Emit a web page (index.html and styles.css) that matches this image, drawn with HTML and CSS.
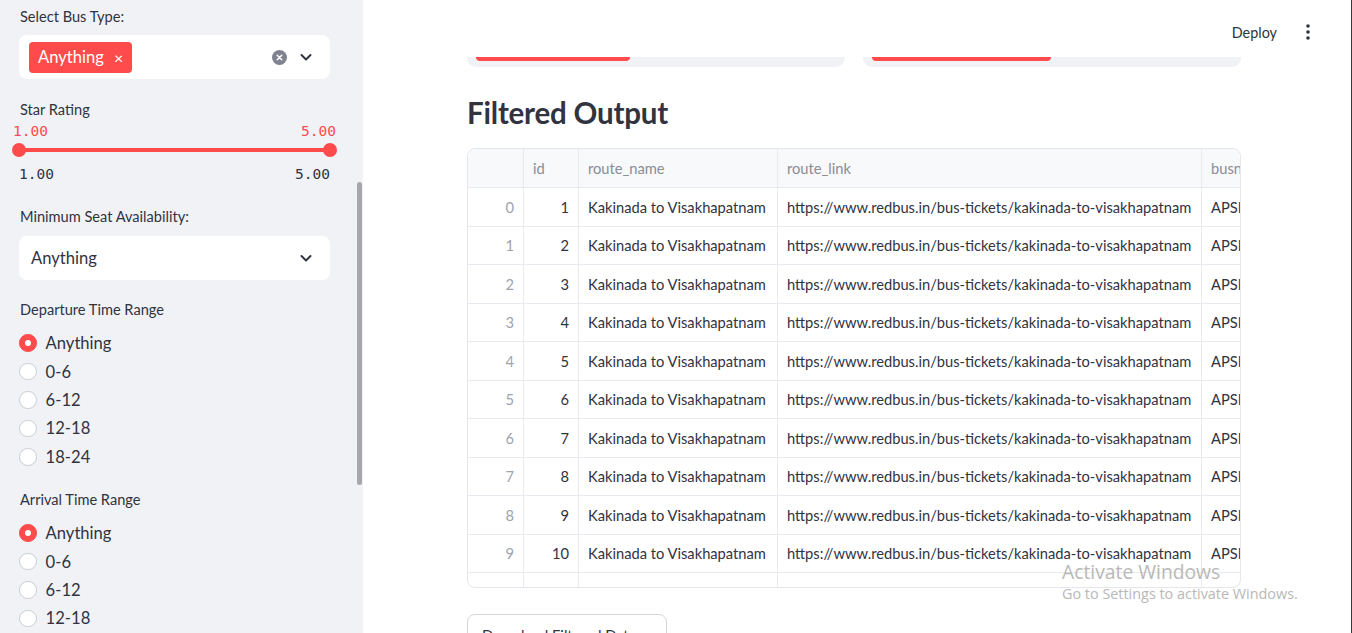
FILE: index.html
```html
<!DOCTYPE html>
<html lang="en">
<head>
<meta charset="utf-8">
<title>Bus Filter</title>
<link rel="stylesheet" href="styles.css">
</head>
<body>
<div class="app">
  <aside class="sidebar">
    <div class="sb-inner">
      <div class="label">Select Bus Type:</div>
      <div class="box multi">
        <span class="tag">Anything<span class="tag-x">×</span></span>
        <span class="spacer"></span>
        <svg class="clear" width="15" height="15" viewBox="0 0 16 16"><circle cx="8" cy="8" r="8" fill="#80838f"/><path d="M5.6 5.6l4.8 4.8M10.4 5.6l-4.8 4.8" stroke="#fff" stroke-width="1.6" stroke-linecap="round"/></svg>
        <svg class="chev" width="14" height="14" viewBox="0 0 14 14"><path d="M2.5 5l4.5 4.5L11.5 5" fill="none" stroke="#31333f" stroke-width="2" stroke-linecap="round" stroke-linejoin="round"/></svg>
      </div>

      <div class="label gap-slider">Star Rating</div>
      <div class="slider">
        <div class="thumb-vals"><span>1.00</span><span>5.00</span></div>
        <div class="track">
          <span class="thumb"></span>
          <span class="rail"></span>
          <span class="thumb"></span>
        </div>
        <div class="ticks"><span>1.00</span><span>5.00</span></div>
      </div>

      <div class="label gap-seat">Minimum Seat Availability:</div>
      <div class="box select">
        <span class="select-val">Anything</span>
        <span class="spacer"></span>
        <svg class="chev" width="14" height="14" viewBox="0 0 14 14"><path d="M2.5 5l4.5 4.5L11.5 5" fill="none" stroke="#31333f" stroke-width="2" stroke-linecap="round" stroke-linejoin="round"/></svg>
      </div>

      <div class="label gap-dep">Departure Time Range</div>
      <div class="radios">
        <div class="radio on"><span class="dot"></span><span>Anything</span></div>
        <div class="radio"><span class="dot"></span><span>0-6</span></div>
        <div class="radio"><span class="dot"></span><span>6-12</span></div>
        <div class="radio"><span class="dot"></span><span>12-18</span></div>
        <div class="radio"><span class="dot"></span><span>18-24</span></div>
      </div>

      <div class="label gap-arr">Arrival Time Range</div>
      <div class="radios">
        <div class="radio on"><span class="dot"></span><span>Anything</span></div>
        <div class="radio"><span class="dot"></span><span>0-6</span></div>
        <div class="radio"><span class="dot"></span><span>6-12</span></div>
        <div class="radio"><span class="dot"></span><span>12-18</span></div>
        <div class="radio"><span class="dot"></span><span>18-24</span></div>
      </div>
    </div>
    <div class="sb-scroll"></div>
  </aside>

  <main class="main">
    <header class="topbar">
      <span class="deploy">Deploy</span>
      <svg class="menu" width="4" height="16" viewBox="0 0 4 16"><circle cx="2" cy="2" r="1.8" fill="#31333f"/><circle cx="2" cy="8" r="1.8" fill="#31333f"/><circle cx="2" cy="14" r="1.8" fill="#31333f"/></svg>
    </header>

    <div class="content">
      <div class="cards">
        <div class="card"><div class="pbar pbar-a"></div></div>
        <div class="card"><div class="pbar pbar-b"></div></div>
      </div>

      <h3 class="title">Filtered Output</h3>

      <div class="dg">
        <div class="dg-grid">
          <div class="c h"></div><div class="c h">id</div><div class="c h">route_name</div><div class="c h">route_link</div><div class="c h">busname</div>

          <div class="c idx">0</div><div class="c num">1</div><div class="c">Kakinada to Visakhapatnam</div><div class="c">https://www.redbus.in/bus-tickets/kakinada-to-visakhapatnam</div><div class="c">APSRTC - 1245</div>
          <div class="c idx">1</div><div class="c num">2</div><div class="c">Kakinada to Visakhapatnam</div><div class="c">https://www.redbus.in/bus-tickets/kakinada-to-visakhapatnam</div><div class="c">APSRTC - 1246</div>
          <div class="c idx">2</div><div class="c num">3</div><div class="c">Kakinada to Visakhapatnam</div><div class="c">https://www.redbus.in/bus-tickets/kakinada-to-visakhapatnam</div><div class="c">APSRTC - 1247</div>
          <div class="c idx">3</div><div class="c num">4</div><div class="c">Kakinada to Visakhapatnam</div><div class="c">https://www.redbus.in/bus-tickets/kakinada-to-visakhapatnam</div><div class="c">APSRTC - 1248</div>
          <div class="c idx">4</div><div class="c num">5</div><div class="c">Kakinada to Visakhapatnam</div><div class="c">https://www.redbus.in/bus-tickets/kakinada-to-visakhapatnam</div><div class="c">APSRTC - 1249</div>
          <div class="c idx">5</div><div class="c num">6</div><div class="c">Kakinada to Visakhapatnam</div><div class="c">https://www.redbus.in/bus-tickets/kakinada-to-visakhapatnam</div><div class="c">APSRTC - 1250</div>
          <div class="c idx">6</div><div class="c num">7</div><div class="c">Kakinada to Visakhapatnam</div><div class="c">https://www.redbus.in/bus-tickets/kakinada-to-visakhapatnam</div><div class="c">APSRTC - 1251</div>
          <div class="c idx">7</div><div class="c num">8</div><div class="c">Kakinada to Visakhapatnam</div><div class="c">https://www.redbus.in/bus-tickets/kakinada-to-visakhapatnam</div><div class="c">APSRTC - 1252</div>
          <div class="c idx">8</div><div class="c num">9</div><div class="c">Kakinada to Visakhapatnam</div><div class="c">https://www.redbus.in/bus-tickets/kakinada-to-visakhapatnam</div><div class="c">APSRTC - 1253</div>
          <div class="c idx">9</div><div class="c num">10</div><div class="c">Kakinada to Visakhapatnam</div><div class="c">https://www.redbus.in/bus-tickets/kakinada-to-visakhapatnam</div><div class="c">APSRTC - 1254</div>
          <div class="c idx">10</div><div class="c num">11</div><div class="c">Kakinada to Visakhapatnam</div><div class="c">https://www.redbus.in/bus-tickets/kakinada-to-visakhapatnam</div><div class="c">APSRTC - 1255</div>
        </div>
      </div>

      <button class="dl">Download Filtered Data</button>
    </div>

    <div class="watermark">
      <div class="wm-1">Activate Windows</div>
      <div class="wm-2">Go to Settings to activate Windows.</div>
    </div>
  </main>
  <div class="edge"></div>
</div>
</body>
</html>
```

FILE: styles.css
```css
* { box-sizing: border-box; }
html, body { margin: 0; padding: 0; }
body {
  width: 1352px;
  height: 633px;
  overflow: hidden;
  font-family: Lato, "Noto Sans", sans-serif;
  color: #31333f;
  background: #fff;
}
.app { display: flex; height: 633px; }

/* ---------- sidebar ---------- */
.sidebar {
  width: 363px;
  flex: none;
  background: #f0f2f6;
  position: relative;
  overflow: hidden;
}
.sb-inner { padding: 7px 33px 0 19px; }
.label {
  font-size: 14.6px;
  line-height: 20px;
  height: 20px;
  white-space: nowrap;
  padding-left: 1px;
}
.box {
  margin-top: 8px;
  height: 44px;
  background: #fff;
  border-radius: 8px;
  display: flex;
  align-items: center;
}
.spacer { flex: 1; }
.multi { padding: 0 17px 0 10px; }
.tag {
  height: 31px;
  background: #ff4b4b;
  color: #fff;
  border-radius: 4px;
  display: flex;
  align-items: center;
  padding: 0 9px 0 9px;
  font-size: 16.6px;
}
.tag-x { margin-left: 10px; font-size: 16px; }
.clear { margin-right: 12px; }
.chev { display: block; }

.gap-slider { margin-top: 21px; }
.thumb-vals {
  margin: 1px -6px 0 -6px;
  display: flex;
  justify-content: space-between;
  font-family: "DejaVu Sans Mono", monospace;
  font-size: 14.5px;
  line-height: 20px;
  color: #ff4b4b;
}
.track {
  height: 18px;
  display: flex;
  align-items: center;
}
.rail {
  flex: 1;
  height: 4px;
  background: #ff4b4b;
}
.thumb {
  width: 14px;
  height: 14px;
  border-radius: 50%;
  background: #ff4b4b;
  flex: none;
  margin: 0 -7px;
  position: relative;
  z-index: 1;
}
.ticks {
  margin-top: 5px;
  display: flex;
  justify-content: space-between;
  font-family: "DejaVu Sans Mono", monospace;
  font-size: 14.5px;
  line-height: 20px;
  color: #31333f;
}
.gap-seat { margin-top: 23px; }
.select { margin-top: 9px; padding: 0 17px 0 12px; }
.select-val { font-size: 16.6px; }
.gap-dep { margin-top: 20px; }
.gap-arr { margin-top: 19px; }

.radios { margin-top: 9px; }
.radio {
  height: 28.4px;
  display: flex;
  align-items: center;
  font-size: 16.6px;
}
.radio .dot {
  width: 17.6px;
  height: 17.6px;
  border-radius: 50%;
  background: #fff;
  border: 1px solid #c9ccd3;
  margin-right: 9px;
  flex: none;
  display: flex;
  align-items: center;
  justify-content: center;
}
.radio.on .dot { background: #ff4b4b; border-color: #ff4b4b; }
.radio.on .dot::after {
  content: "";
  width: 6px;
  height: 6px;
  border-radius: 50%;
  background: #fff;
}
.sb-scroll {
  position: absolute;
  right: 1px;
  top: 182px;
  width: 5px;
  height: 303px;
  border-radius: 3px;
  background: #a6a7ae;
}

/* ---------- main ---------- */
.main {
  flex: 1;
  position: relative;
  background: #fff;
  overflow: hidden;
}
.topbar {
  height: 57px;
  display: flex;
  justify-content: flex-end;
  align-items: center;
  padding: 7px 41px 0 0;
}
.deploy { font-size: 14.4px; margin-right: 29px; }
.menu { display: block; }

.content { padding-left: 104px; width: 878px; }
.cards { display: flex; gap: 18px; }
.card {
  flex: 1;
  height: 10px;
  background: #f0f2f6;
  border-radius: 0 0 9px 9px;
}
.pbar {
  margin-left: 9px;
  height: 4px;
  background: #ff4b4b;
  border-radius: 0 0 4px 4px;
}
.pbar-a { width: 154px; }
.pbar-b { width: 179px; }

.title {
  margin: 26px 0 15px;
  font-size: 29.5px;
  line-height: 40px;
  font-weight: 700;
  letter-spacing: -0.2px;
}

.dg {
  width: 774px;
  height: 440px;
  border: 1px solid #e4e6ec;
  border-radius: 8px;
  overflow: hidden;
}
.dg-grid {
  display: grid;
  grid-template-columns: 56px 55px 199px 424px 200px;
  grid-template-rows: 39px;
  grid-auto-rows: 38.5px;
  width: 934px;
}
.c {
  border-right: 1px solid #e8eaef;
  border-bottom: 1px solid #e8eaef;
  padding: 0 9px;
  display: flex;
  align-items: center;
  font-size: 14.7px;
  white-space: nowrap;
  overflow: hidden;
  color: #31333f;
}
.c.h { background: #f8f9fb; color: #8a8c96; }
.c.idx { justify-content: flex-end; color: #a0a3ad; }
.c.num { justify-content: flex-end; }

.dl {
  margin-top: 26px;
  width: 200px;
  height: 42px;
  background: #fff;
  border: 1px solid #d5d7dd;
  border-radius: 8px;
  font-family: inherit;
  font-size: 14.7px;
  color: #31333f;
  padding: 0 14px;
  text-align: left;
}

.watermark {
  position: absolute;
  left: 699px;
  top: 560px;
  font-family: "Open Sans", sans-serif;
  color: #b8b8b8;
  white-space: nowrap;
}
.wm-1 { font-size: 19.3px; line-height: 24px; }
.wm-2 { font-size: 14.4px; line-height: 20px; }

.edge { width: 1px; flex: none; background: #3a3a3a; }
```
